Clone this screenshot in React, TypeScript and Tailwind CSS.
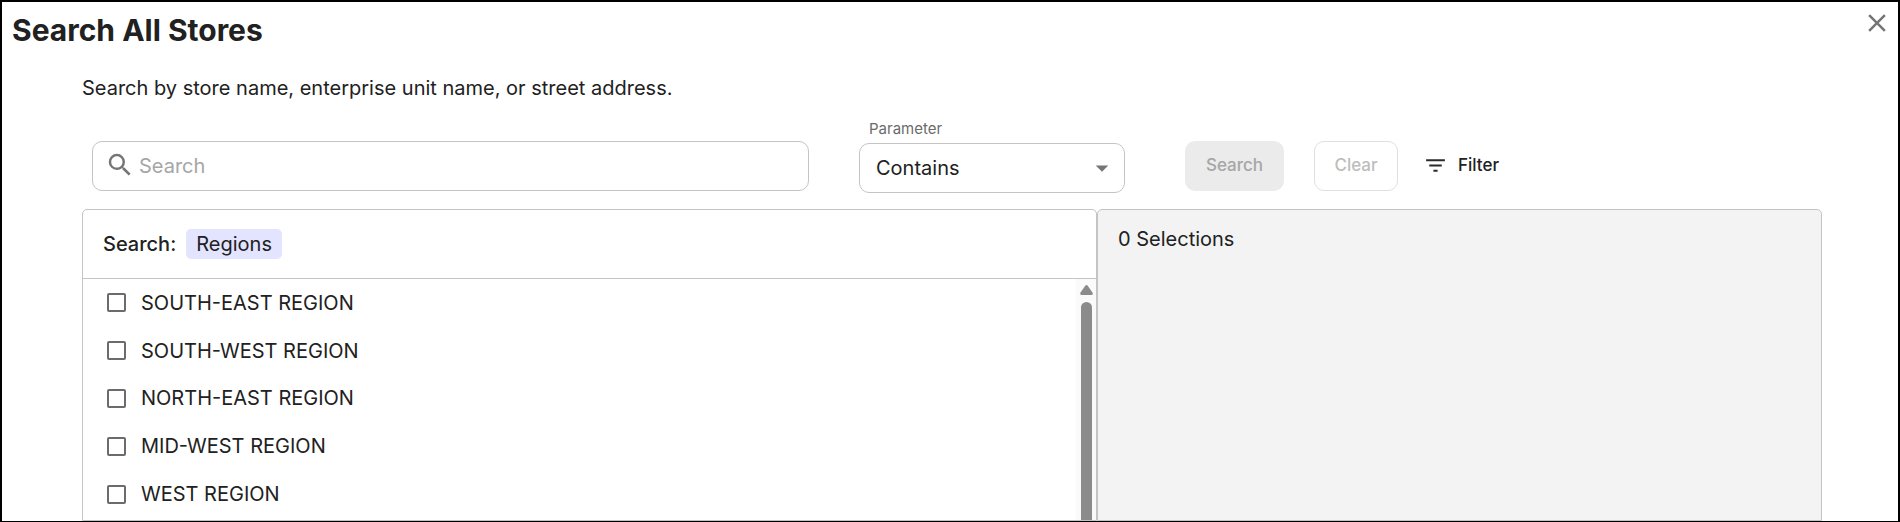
import { useState } from 'react'
import { MdArrowDropDown, MdClose, MdFilterList, MdSearch } from 'react-icons/md'

const regions = [
  'SOUTH-EAST REGION',
  'SOUTH-WEST REGION',
  'NORTH-EAST REGION',
  'MID-WEST REGION',
  'WEST REGION',
]

function SearchBar() {
  const [query, setQuery] = useState('')

  return (
    <form className="flex items-start pl-[10px] pt-4" onSubmit={e => e.preventDefault()}>
      <label className="mt-[22px] flex h-[50px] max-w-[717px] flex-1 items-center rounded-[10px] border border-[#c4c4c4] pl-3">
        <MdSearch className="mb-[2px] size-[30px] shrink-0 text-[#757575]" />
        <input
          type="text"
          aria-label="Search stores"
          placeholder="Search"
          value={query}
          onChange={e => setQuery(e.target.value)}
          className="ml-1 w-full bg-transparent text-xl outline-none placeholder:text-[#a6a6a6]"
        />
      </label>

      <div className="ml-[50px] w-[266px]">
        <label htmlFor="parameter" className="mb-1 block pl-[10px] text-[15px] leading-5 text-[#6b6b6b]">
          Parameter
        </label>
        <div className="relative">
          <select
            id="parameter"
            className="block h-[50px] w-full appearance-none rounded-[10px] border border-[#c4c4c4] bg-white pl-4 text-xl"
          >
            <option>Contains</option>
          </select>
          <MdArrowDropDown className="pointer-events-none absolute right-2 top-[10px] size-[30px] text-[#757575]" />
        </div>
      </div>

      <div className="mt-[22px] flex h-[50px] items-center text-[17px] font-medium">
        <button
          type="submit"
          disabled
          className="ml-[60px] h-[50px] w-[99px] rounded-[10px] bg-[#ebebeb] text-[#a6a6a6]"
        >
          Search
        </button>
        <button
          type="button"
          disabled
          className="ml-[30px] h-[50px] w-[84px] rounded-[10px] border border-[#e0e0e0] text-[#bdbdbd]"
        >
          Clear
        </button>
        <button type="button" className="ml-[25px] flex items-center gap-[10px]">
          <MdFilterList className="mb-[2px] size-[25px] text-[#2b2b2b]" />
          Filter
        </button>
      </div>
    </form>
  )
}

function RegionList() {
  return (
    <div className="flex min-h-0 flex-1">
      <ul className="flex flex-1 flex-col pb-[2px] pl-6">
        {regions.map(region => (
          <li key={region} className="flex flex-1 items-center">
            <label className="flex items-center gap-[15px] text-xl leading-7">
              <input
                type="checkbox"
                className="size-[19px] appearance-none rounded-[2px] border-2 border-[#6b6b6b] checked:bg-[#6b6b6b]"
              />
              {region}
            </label>
          </li>
        ))}
      </ul>
      <div className="flex w-5 flex-col items-center bg-[#fafafa] pt-[6px]">
        <svg viewBox="0 0 13 10" className="h-[10px] w-[13px] shrink-0 fill-[#8b8b8b]">
          <path d="M5.2 .8Q6.5 -.6 7.8 .8L12.6 7.8Q13.2 10 11.5 10H1.5Q-.2 10 .4 7.8Z" />
        </svg>
        <div className="mt-[7px] w-[11px] flex-1 rounded-t-full bg-[#8b8b8b]" />
      </div>
    </div>
  )
}

export default function App() {
  return (
    <main className="flex min-h-screen flex-col border-2 border-b border-black bg-white font-['Inter',sans-serif] text-[#212121]">
      <header className="flex items-start justify-between pl-[10px] pr-[6px] pt-[6px]">
        <h1 className="pt-[2px] text-[30px] font-bold leading-10">Search All Stores</h1>
        <button type="button" aria-label="Close" className="text-[#757575]">
          <MdClose className="size-[30px]" />
        </button>
      </header>

      <section className="flex flex-1 flex-col pl-20 pr-[76px] pt-[23px]">
        <p className="text-xl leading-[30px]">Search by store name, enterprise unit name, or street address.</p>
        <SearchBar />

        <div className="mt-4 flex flex-1">
          <div className="flex w-7/12 flex-col rounded-t-[5px] border border-[#c4c4c4]">
            <div className="flex h-[69px] items-center gap-[10px] border-b border-[#c4c4c4] pl-5 text-xl">
              <span className="font-medium">Search:</span>
              <span className="rounded-[5px] bg-[#e3e4ff] px-[10px] leading-[30px]">Regions</span>
            </div>
            <RegionList />
          </div>
          <div className="w-5/12 rounded-t-[5px] border border-[#c4c4c4] bg-[#f3f3f3] px-5 py-[14px]">
            <p className="text-xl leading-[30px]">0 Selections</p>
          </div>
        </div>
      </section>
    </main>
  )
}
